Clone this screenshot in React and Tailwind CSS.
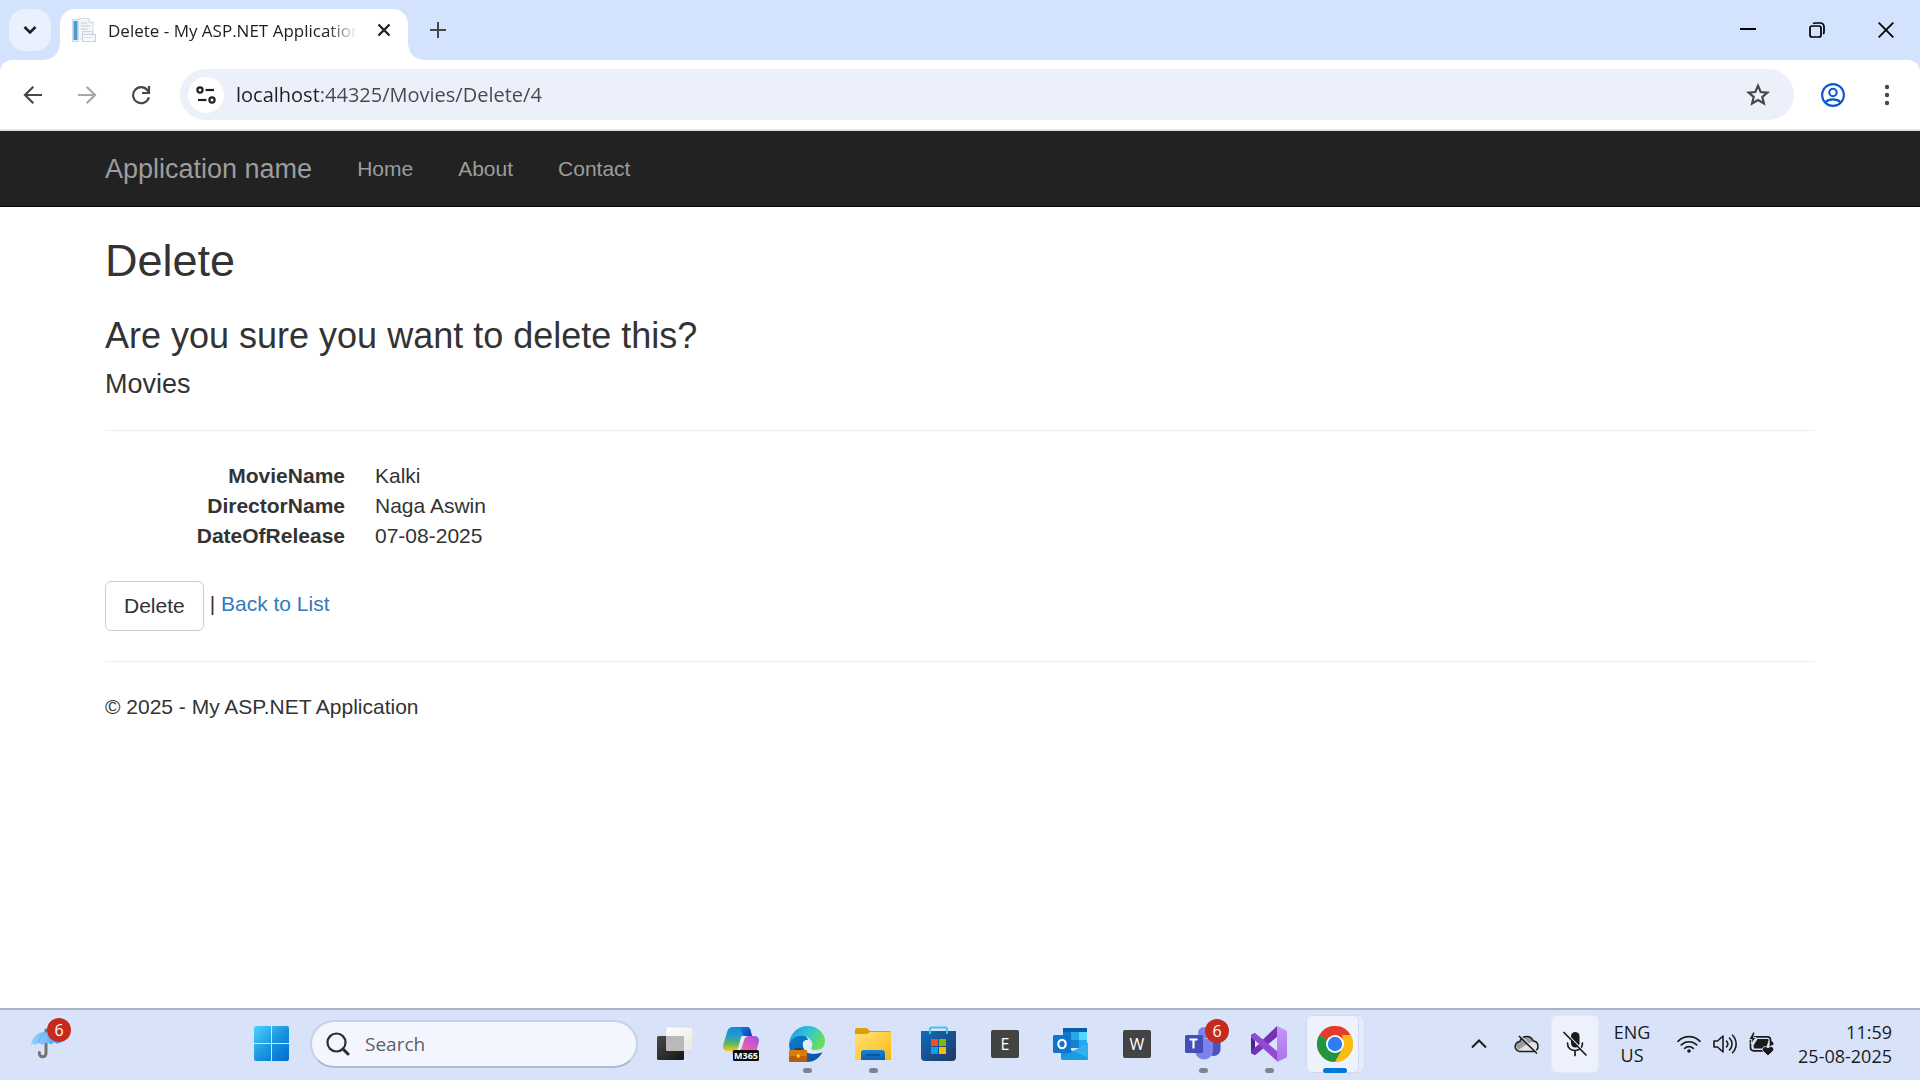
import React from "react";

const UI = "font-['Open_Sans','Noto_Sans',sans-serif]";

/* ---------- browser icons ---------- */

const stroke = { fill: "none", stroke: "currentColor", strokeLinecap: "butt", strokeLinejoin: "miter" };

const ChevronDown = () => (
  <svg width="14" height="10" viewBox="0 0 14 10" {...stroke} strokeWidth="2.6"><path d="M1.5 2 7 7.5 12.5 2" /></svg>
);
const CloseTab = () => (
  <svg width="14" height="14" viewBox="0 0 14 14" {...stroke} strokeWidth="2.3"><path d="M1.5 1.5l11 11M12.5 1.5l-11 11" /></svg>
);
const Plus = () => (
  <svg width="16" height="16" viewBox="0 0 16 16" {...stroke} strokeWidth="2"><path d="M8 0v16M0 8h16" /></svg>
);
const Back = () => (
  <svg width="20" height="20" viewBox="0 0 20 20" {...stroke} strokeWidth="2.2"><path d="M19 10H3M10.3 1.7 2 10l8.3 8.3" /></svg>
);
const Forward = () => (
  <svg width="20" height="20" viewBox="0 0 20 20" {...stroke} strokeWidth="2.2"><path d="M1 10h16M9.7 1.7 18 10l-8.3 8.3" /></svg>
);
const Reload = () => (
  <svg width="20" height="20" viewBox="0 0 20 20" {...stroke} strokeWidth="2.2">
    <path d="M17.9 12.2A8 8 0 1 1 16.4 5.2L18 7.4" />
    <path d="M18 1v7h-7" />
  </svg>
);
const Tune = () => (
  <svg width="20" height="20" viewBox="0 0 20 20" {...stroke} strokeWidth="2.2">
    <circle cx="4" cy="5" r="2.6" /><path d="M9.5 5H18" />
    <circle cx="16" cy="15" r="2.6" /><path d="M2 15h8.5" />
  </svg>
);
const Star = () => (
  <svg width="24" height="24" viewBox="0 0 24 24" {...stroke} strokeWidth="2.2">
    <path d="M12 2.800l2.700 6.200 6.700.6-5.100 4.400 1.600 6.500-5.900-3.500-5.900 3.500L7.700 14l-5.100-4.400 6.700-.6z" />
  </svg>
);
const Profile = () => (
  <svg width="24" height="24" viewBox="0 0 24 24" {...stroke} strokeWidth="2.1">
    <circle cx="12" cy="12" r="10.900" /><circle cx="12" cy="9.500" r="3.700" />
    <path d="M4.300 19.400C6.200 17.400 9 16.400 12 16.400s5.800 1 7.700 3" />
  </svg>
);
const Dots = () => (
  <svg width="6" height="22" viewBox="0 0 6 22" fill="currentColor"><circle cx="3" cy="3" r="2.200" /><circle cx="3" cy="11" r="2.200" /><circle cx="3" cy="19" r="2.200" /></svg>
);
const Minimize = () => (
  <svg width="16" height="16" viewBox="0 0 16 16" {...stroke} strokeWidth="2"><path d="M0 7h16" /></svg>
);
const Restore = () => (
  <svg width="16" height="16" viewBox="0 0 16 16" {...stroke} strokeWidth="1.700">
    <rect x="1" y="4" width="11" height="11" rx="2" /><path d="M4 1.500C5 1 5.500 1 6.500 1H11.500A3.500 3.500 0 0 1 15 4.500V10c0 .8-.2 1.400-.8 2" />
  </svg>
);
const CloseWindow = () => (
  <svg width="16" height="16" viewBox="0 0 16 16" {...stroke} strokeWidth="1.800"><path d="M.7.700l14.600 14.600M15.300.700.700 15.300" /></svg>
);
const Favicon = () => (
  <svg width="24" height="25" viewBox="0 0 24 25" className="shrink-0">
    <path d="M6 .5h11l4 4V21H6z" fill="#f3f5f7" stroke="#d8dce1" />
    <path d="M17 .5v4h4" fill="#fff" stroke="#cfd4da" />
    <path d="M9 5h6M9 8h9M9 11h7" stroke="#dde1e6" strokeWidth="2" />
    <rect x=".5" y="1.500" width="6" height="22" fill="#e3edf5" stroke="#d4dce4" />
    <rect x="1.500" y="3" width="4" height="19" fill="#4b9cd3" />
    <rect x="10.500" y="13.500" width="10" height="8" fill="#edf0f3" stroke="#d0d5db" />
    <rect x="10.500" y="16.500" width="13" height="7" fill="#f6f8fa" stroke="#c9cfd6" />
    <path d="M12 19.500h9" stroke="#dde2e8" />
  </svg>
);

/* ---------- taskbar icons ---------- */

const Umbrella = () => (
  <svg width="34" height="32" viewBox="0 0 34 32">
    <defs><linearGradient id="umb" x1="0" y1="0" x2="1" y2="0"><stop offset="0" stopColor="#8fd0ff" /><stop offset=".5" stopColor="#79bdfb" /><stop offset="1" stopColor="#3f92ea" /></linearGradient></defs>
    <path d="M15 2v23.500a3.300 3.300 0 0 1-6.600 0v-1" fill="none" stroke="#77716f" strokeWidth="3" strokeLinecap="round" />
    <path d="M0 16.500C1 8.500 7 4 14.500 4S29 8.500 30.500 15.500l-1.500-1.200-2.500 1.700-3-1.700-3.500 2.200-4-2-4.500 2.200L7.500 15 4 16.900 2 15.700z" fill="url(#umb)" />
    <path d="M14.500 4C10 7 8 11 7.500 15M14.500 4C17.500 7 19.500 11 20 16" fill="none" stroke="#5aa4e8" strokeWidth=".8" />
  </svg>
);
const WindowsLogo = () => (
  <svg width="36" height="36" viewBox="0 0 36 36">
    <defs><linearGradient id="win" gradientUnits="userSpaceOnUse" x1="0" y1="0" x2="36" y2="36"><stop offset="0" stopColor="#4fd3ff" /><stop offset=".5" stopColor="#1a95e0" /><stop offset="1" stopColor="#0069cc" /></linearGradient></defs>
    <g fill="url(#win)"><path d="M2 0h15v17H0V2a2 2 0 0 1 2-2z" /><path d="M18 0h15a2 2 0 0 1 2 2v15H18z" /><path d="M0 18h17v17H2a2 2 0 0 1-2-2z" /><path d="M18 18h17v15a2 2 0 0 1-2 2H18z" /></g>
  </svg>
);
const SearchGlyph = () => (
  <svg width="24" height="24" viewBox="0 0 24 24" fill="none" stroke="#2b2d31" strokeLinecap="round"><circle cx="10.500" cy="10.500" r="9" strokeWidth="2.200" /><path d="M17 17l5 5" strokeWidth="3" /></svg>
);
const TaskView = () => (
  <svg width="36" height="36" viewBox="0 0 36 36">
    <defs><linearGradient id="tv" x1="0" y1="0" x2="1" y2="1"><stop offset="0" stopColor="#4a4a4a" /><stop offset="1" stopColor="#151515" /></linearGradient>
      <linearGradient id="tv2" x1="0" y1="0" x2="1" y2="1"><stop offset="0" stopColor="#fff" /><stop offset="1" stopColor="#e6e6e6" /></linearGradient></defs>
    <rect x="9" y="1" width="27" height="24" rx="1" fill="url(#tv2)" stroke="#d5d9e0" strokeWidth=".6" />
    <rect x="0" y="10" width="27" height="24" rx="1.500" fill="url(#tv)" />
    <path d="M9 10h18v15H10a1 1 0 0 1-1-1z" fill="#b9b9b9" />
  </svg>
);
const Copilot = () => (
  <svg width="36" height="36" viewBox="0 0 36 36">
    <defs>
      <linearGradient id="cpA" x1="0" y1="0" x2="0" y2="1"><stop offset="0" stopColor="#1186e6" /><stop offset=".4" stopColor="#2a9cc4" /><stop offset=".7" stopColor="#5fb85c" /><stop offset="1" stopColor="#f2cf1c" /></linearGradient>
      <linearGradient id="cpB" x1="0" y1="0" x2="1" y2="1"><stop offset="0" stopColor="#0f7de0" /><stop offset="1" stopColor="#123fae" /></linearGradient>
      <linearGradient id="cpC" x1="1" y1="0" x2="0" y2="1"><stop offset="0" stopColor="#9a52f0" /><stop offset=".5" stopColor="#e85bb0" /><stop offset="1" stopColor="#ff8a4c" /></linearGradient>
    </defs>
    <path d="M10 1h14c2 0 3 1 3.500 3l1.500 6h-5c-3 0-5 2-6 5l-2.500 8c-.5 2-2 2-4 2H4c-3 0-4.500-2-3.800-6L4 6c1-3.500 3-5 6-5z" fill="url(#cpA)" />
    <path d="M16 1h8c2 0 3 1 3.500 3l1.500 6h-6c-2.500 0-3.500-1.500-4-4S18 1.500 16 1z" fill="url(#cpB)" />
    <path d="M25 10h6c4 0 5.500 2.500 4.800 6L33 26c-1 3-3 5-6 5H14c-3 0-4-1-4.500-3L9 24.500h3c3 0 4.500-1.500 5.500-4.500l2.500-7c.8-2 2.500-3 5-3z" fill="url(#cpC)" />
    <path d="M19 10h6c-2 .5-3 1.500-3.500 3l-3 9c-.7 2-2 3-4 3h-2.500c2-.5 3-2 3.500-4l2-8c.4-1.500.8-2.400 1.500-3z" fill="#e6eaf9" />
    <rect x="10" y="24" width="26" height="11" rx="1.500" fill="#0a0a0a" />
    <text x="23" y="33" textAnchor="middle" fontFamily="Open Sans" fontWeight="700" fontSize="9" fill="#fff">M365</text>
  </svg>
);
const Edge = () => (
  <svg width="36" height="36" viewBox="0 0 36 36">
    <defs>
      <linearGradient id="edA" x1="0" y1="0" x2="1" y2=".5"><stop offset="0" stopColor="#1a8fe0" /><stop offset=".5" stopColor="#2fc3d6" /><stop offset="1" stopColor="#66e05a" /></linearGradient>
      <linearGradient id="edB" x1="0" y1="0" x2="1" y2="1"><stop offset="0" stopColor="#0b82d6" /><stop offset="1" stopColor="#0f4aa0" /></linearGradient>
    </defs>
    <path d="M0 18a18 18 0 0 1 4-9c6-3 15 0 15 6-3-2-6 1-5 5 2 7 12 9 19.500 6C30 33 24 36 18 36A18 18 0 0 1 0 18z" fill="url(#edB)" />
    <path d="M.2 17C1.500 7 9 0 18.500 0 29 0 36 7.500 36 15c0 7-5 9-10 9-4 0-4.500-1.500-3.500-3 2.500-4-1-9.500-7.500-11C8.500 8.600 3 12 .2 17z" fill="url(#edA)" />
    <path d="M20 14.500c-4-1.500-6.500 1.500-6 5 .6 4.500 3.500 7.500 7.500 8 5 .7 9.500 0 12-2-3 .9-7 .9-9.500 0-3-1-1.500-3-1-5 .4-2.400-1-5-3-6z" fill="#e3edf9" />
    <path d="M7 25v-2h5v2" fill="none" stroke="#5c3200" strokeWidth="1.500" />
    <rect x="0" y="24" width="18" height="12" rx="1" fill="#b86004" /><rect x="0" y="24" width="18" height="6" fill="#d67c0c" />
    <rect x="8" y="28.500" width="2.500" height="3" fill="#ffe04a" />
  </svg>
);
const Folder = () => (
  <svg width="36" height="36" viewBox="0 0 36 36">
    <defs><linearGradient id="fo" x1="0" y1="0" x2="1" y2="1"><stop offset="0" stopColor="#ffe07a" /><stop offset=".5" stopColor="#ffcf45" /><stop offset="1" stopColor="#f7b410" /></linearGradient>
      <linearGradient id="fo2" x1="0" y1="0" x2="0" y2="1"><stop offset="0" stopColor="#1684d8" /><stop offset="1" stopColor="#0f5fae" /></linearGradient></defs>
    <path d="M0 4a2 2 0 0 1 2-2h9.500l3.500 3h19a2 2 0 0 1 2 2v5H0z" fill="#dd9f08" />
    <path d="M0 8h12l3-2h19a2 2 0 0 1 2 2v26H0z" fill="url(#fo)" />
    <path d="M6 34V27a3 3 0 0 1 3-3h18a3 3 0 0 1 3 3v7z" fill="url(#fo2)" />
    <path d="M11 29h14" stroke="#0a4a8c" strokeWidth="1.500" />
  </svg>
);
const Store = () => (
  <svg width="36" height="36" viewBox="0 0 36 36">
    <defs><linearGradient id="st" x1="0" y1="0" x2="1" y2="1"><stop offset="0" stopColor="#0c6ec0" /><stop offset="1" stopColor="#24365f" /></linearGradient></defs>
    <path d="M0 5h35v26a4 4 0 0 1-4 4H4a4 4 0 0 1-4-4z" fill="url(#st)" />
    <path d="M9 8V3a1.500 1.500 0 0 1 1.500-1.500h14A1.500 1.500 0 0 1 26 3v5" fill="none" stroke="#3fc6f5" strokeWidth="2" />
    <rect x="10" y="13" width="7" height="7" fill="#f25022" /><rect x="18" y="13" width="7" height="7" fill="#7fba00" />
    <rect x="10" y="21" width="7" height="7" fill="#00a4ef" /><rect x="18" y="21" width="7" height="7" fill="#ffb900" />
  </svg>
);
const LetterTile = ({ children }) => (
  <span className="flex size-7 items-center justify-center rounded-xs bg-[#434343] text-base leading-none text-white">{children}</span>
);
const Outlook = () => (
  <svg width="36" height="36" viewBox="0 0 36 36">
    <rect x="10" y="2" width="24" height="9" fill="#0a5ca8" />
    <rect x="10" y="6" width="8" height="8" fill="#0f78c8" /><rect x="18" y="6" width="8" height="8" fill="#28a8ea" /><rect x="26" y="6" width="8" height="8" fill="#50d9ff" />
    <rect x="10" y="14" width="8" height="8" fill="#0a5ca8" /><rect x="18" y="14" width="8" height="8" fill="#1380d0" /><rect x="26" y="14" width="8" height="8" fill="#28a8ea" />
    <path d="M8 18l13.500 8L35 17v15a2 2 0 0 1-2 2H10a2 2 0 0 1-2-2z" fill="#1590dc" />
    <path d="M35 17v15c0 1.500-1 2-2 2L20 25z" fill="#32b0ee" />
    <path d="M10 34h23c1.500 0 2-1 2-2l-14-7-13 7c0 1 1 2 2 2z" fill="#1a9be2" />
    <rect x="0" y="9" width="18" height="18" rx="1.500" fill="#0f74cc" />
    <ellipse cx="9" cy="18" rx="3.700" ry="4.200" fill="none" stroke="#fff" strokeWidth="2.200" />
  </svg>
);
const Teams = () => (
  <svg width="36" height="36" viewBox="0 0 36 36">
    <circle cx="29.500" cy="8" r="4" fill="#5059c9" />
    <path d="M23 14h12.500v10a6.500 6.500 0 0 1-6.500 6c-3 0-5-2-6-4z" fill="#4b53bc" />
    <circle cx="19" cy="7" r="6" fill="#7b83eb" />
    <path d="M10 13h16a2 2 0 0 1 2 2v9c0 5.500-4 9.500-9 9.500S10 29.500 10 24z" fill="#7b83eb" />
    <rect x="0" y="9" width="18" height="18" rx="1.500" fill="#464eb8" />
    <path d="M4.500 13.500h8M8.500 13.500v9" stroke="#fff" strokeWidth="2.200" />
  </svg>
);
const VisualStudio = () => (
  <svg width="36" height="36" viewBox="0 0 36 36">
    <defs><linearGradient id="vs" x1="0" y1="0" x2="0" y2="1"><stop offset="0" stopColor="#c896f5" /><stop offset="1" stopColor="#a873ec" /></linearGradient></defs>
    <path d="M0 9l4-2v22l-4-2z" fill="#52218a" />
    <path d="M4 29l-4-2v-2L26 0l1 10L5 28.500z" fill="#7433b4" />
    <path d="M0 9l4-2 23 19v10L0 11.500z" fill="#8f4cd0" />
    <path d="M4 14.500v7L8 18z" fill="#d7e2f9" />
    <path d="M26 0l9 4.200a2 2 0 0 1 1 1.800v24a2 2 0 0 1-1 1.800L26 36z" fill="url(#vs)" />
  </svg>
);
const Chrome = () => (
  <svg width="36" height="36" viewBox="0 0 36 36">
    <circle cx="18" cy="18" r="18" fill="#fbbc12" />
    <path d="M18 18 2.410 9A18 18 0 0 1 33.590 9z" fill="#e33b2e" />
    <path d="M2.410 9A18 18 0 0 0 18 36l7.800-13.500-7.800-4.500z" fill="#229444" />
    <path d="M18 36l7.790-13.500A9 9 0 0 0 25.800 13.500L25 9h8.590A18 18 0 0 1 18 36z" fill="#fbbc12" />
    <circle cx="18" cy="18" r="9" fill="#fff" /><circle cx="18" cy="18" r="7.200" fill="#2f7bf0" />
  </svg>
);

const ChevronUp = () => (
  <svg width="16" height="10" viewBox="0 0 16 10" {...stroke} strokeWidth="2"><path d="M1 8.500l7-7 7 7" /></svg>
);
const CloudOff = () => (
  <svg width="26" height="22" viewBox="0 0 26 22">
    <path d="M6.500 18.500a5 5 0 0 1-.7-10A7.200 7.200 0 0 1 19.300 8a5.300 5.300 0 0 1 .2 10.500z" fill="#e2e2e2" />
    <path d="M2 13a5 5 0 0 1 3.800-4.500A7.200 7.200 0 0 1 19.300 8L12 12l-8 5z" fill="#9c9c9c" />
    <path d="M6.500 18.500a5 5 0 0 1-.7-10A7.200 7.200 0 0 1 19.300 8a5.300 5.300 0 0 1 .2 10.500z" fill="none" stroke="#1b1b1b" strokeWidth="1.500" />
    <path d="M6 2.500 24 20" stroke="#dfe8fa" strokeWidth="1.500" /><path d="M5 3l18 17.500" stroke="#1b1b1b" strokeWidth="1.600" />
  </svg>
);
const MicOff = () => (
  <svg width="24" height="26" viewBox="0 0 24 26" fill="none" stroke="#1b1b1b" strokeLinecap="round">
    <rect x="8" y="1" width="8.500" height="15.500" rx="4.200" fill="#1b1b1b" stroke="none" />
    <path d="M4.500 12c0 5 3.500 7.500 7.500 7.500s7.500-2.500 7.500-7.500M12 20v4.500" strokeWidth="1.700" />
    <path d="M2 1l22 22.500" stroke="#eef2fc" strokeWidth="1.500" /><path d="M1 1.500l22 22.500" strokeWidth="1.700" />
  </svg>
);
const Wifi = () => (
  <svg width="24" height="18" viewBox="0 0 24 18" fill="none" stroke="#1b1b1b" strokeWidth="1.700" strokeLinecap="round">
    <path d="M1 6.300a15.500 15.500 0 0 1 22 0M4.300 9.900a11 11 0 0 1 15.400 0M7.700 13.300a6.300 6.300 0 0 1 8.600 0" /><circle cx="12" cy="16" r="1.800" fill="#1b1b1b" stroke="none" />
  </svg>
);
const Speaker = () => (
  <svg width="25" height="20" viewBox="0 0 25 20" fill="none" stroke="#1b1b1b" strokeWidth="1.600" strokeLinecap="round" strokeLinejoin="round">
    <path d="M1 7v6h3.500L10 18V2L4.500 7z" /><path d="M13.500 7a4.500 4.500 0 0 1 0 6M16.500 4a8.500 8.500 0 0 1 0 12M19.500 1.200a12.500 12.500 0 0 1 0 17.600" />
  </svg>
);
const Battery = () => (
  <svg width="25" height="24" viewBox="0 0 25 24">
    <rect x="1.500" y="4.800" width="20" height="14" rx="3" fill="none" stroke="#1b1b1b" strokeWidth="1.700" />
    <path d="M8.500 7h10c1 0 1.300.8 1 1.500l-2.500 8H5l-.5-3z" fill="#1b1b1b" />
    <path d="M22 9c2 .5 2.500 1.500 2.500 4h-3z" fill="#1b1b1b" />
    <path d="M4 0 0 7.500h3L2 12l5-6.500H4.500L6 0z" fill="#1b1b1b" stroke="#dbe6fb" strokeWidth=".8" />
    <path d="M19 24l-5-4.800c-2.500-3 1.500-6.500 5-3.400 3.500-3.100 7.500.4 5 3.400z" fill="#1b1b1b" stroke="#dbe6fb" strokeWidth="1" />
  </svg>
);

/* ---------- browser chrome ---------- */

const IconButton = ({ label, className = "", children }) => (
  <button type="button" aria-label={label} className={`flex size-[42px] shrink-0 items-center justify-center rounded-full ${className}`}>{children}</button>
);

function TabStrip() {
  return (
    <div className="flex h-[60px] items-end pl-[9px]">
      <button type="button" aria-label="Search tabs" className="mb-[9px] flex size-[42px] items-center justify-center rounded-2xl bg-[#e9f1fe] text-[#1f1f1f]">
        <ChevronDown />
      </button>
      <div className="relative ml-[9px] flex h-[51px] w-[348px] items-center rounded-t-[15px] bg-white pb-[9px] pl-3 pr-2">
        <span className="absolute bottom-0 right-full size-[15px] bg-[radial-gradient(circle_at_0_0,transparent_14px,white_15px)]" />
        <span className="absolute bottom-0 left-full size-[15px] bg-[radial-gradient(circle_at_100%_0,transparent_14px,white_15px)]" />
        <Favicon />
        <span className="ml-3 mr-2 min-w-0 flex-1 overflow-hidden whitespace-nowrap pt-[2px] text-[17px] leading-6 text-[#1f1f1f] [mask-image:linear-gradient(to_right,black_87%,transparent_99%)]">
          Delete - My ASP.NET Application
        </span>
        <button type="button" aria-label="Close tab" className="flex size-8 items-center justify-center rounded-full text-[#1f1f1f]"><CloseTab /></button>
      </div>
      <IconButton label="New tab" className="mb-[9px] ml-[9px] text-[#474747]"><Plus /></IconButton>
      <div className="ml-auto flex self-stretch text-black">
        {[["Minimize", Minimize], ["Restore", Restore], ["Close", CloseWindow]].map(([label, Icon]) => (
          <button key={label} type="button" aria-label={label} className="flex w-[69px] items-center justify-center"><Icon /></button>
        ))}
      </div>
    </div>
  );
}

function Toolbar() {
  return (
    <div className="flex h-[71px] items-center rounded-t-xl border-b-2 border-[#e2e3e6] bg-white pl-3 pr-3 text-[#474747]">
      <div className="flex gap-3">
        <IconButton label="Back"><Back /></IconButton>
        <IconButton label="Forward" className="text-[#a8a8a8]"><Forward /></IconButton>
        <IconButton label="Reload"><Reload /></IconButton>
      </div>
      <form className="ml-[18px] flex h-[51px] min-w-0 flex-1 items-center rounded-full bg-[#ebf0fa] pl-2 pr-[15px]" onSubmit={(e) => e.preventDefault()}>
        <button type="button" aria-label="View site information" className="flex size-9 shrink-0 items-center justify-center rounded-full bg-white text-[#1f1f1f]"><Tune /></button>
        <input
          aria-label="Address"
          defaultValue="localhost:44325/Movies/Delete/4"
          className="ml-3 min-w-0 flex-1 bg-[linear-gradient(to_right,#1f1f1f_82px,#474747_82px)] bg-clip-text text-xl text-transparent outline-none"
        />
        <button type="button" aria-label="Bookmark this tab" className="flex size-[42px] items-center justify-center"><Star /></button>
      </form>
      <IconButton label="Profile" className="ml-[18px] text-[#0b57d0]"><Profile /></IconButton>
      <IconButton label="Menu" className="ml-3"><Dots /></IconButton>
    </div>
  );
}

/* ---------- web page ---------- */

const fields = [
  ["MovieName", "Kalki"],
  ["DirectorName", "Naga Aswin"],
  ["DateOfRelease", "07-08-2025"],
];

function Page() {
  return (
    <div className="min-h-0 flex-1 overflow-hidden bg-white font-['Liberation_Sans',Arial,sans-serif] text-[21px] leading-[30px] text-[#333]">
      <nav className="border-b border-[#080808] bg-[#222] px-[105px] text-[#9d9d9d]">
        <div className="mx-auto flex h-[75px] max-w-[1710px] items-center gap-[45px]">
          <a href="#app" className="text-[27px]">Application name</a>
          <a href="#home">Home</a>
          <a href="#about">About</a>
          <a href="#contact">Contact</a>
        </div>
      </nav>
      <div className="px-[105px] pt-[29px]">
        <main className="mx-auto max-w-[1710px]">
          <h2 className="text-[45px] leading-[49px]">Delete</h2>
          <h3 className="mt-[31px] text-[36px] leading-[40px]">Are you sure you want to delete this?</h3>
          <h4 className="mt-[13px] text-[27px] leading-[30px]">Movies</h4>
          <hr className="mb-[30px] mt-[31px] border-[#eee]" />
          <dl className="grid grid-cols-[240px_1fr] gap-x-[30px]">
            {fields.map(([name, value]) => (
              <React.Fragment key={name}>
                <dt className="text-right font-bold">{name}</dt>
                <dd>{value}</dd>
              </React.Fragment>
            ))}
          </dl>
          <form className="mt-[30px] flex items-start" onSubmit={(e) => e.preventDefault()}>
            <button type="submit" className="rounded-md border border-[#ccc] bg-white px-[18px] py-[9px]">Delete</button>
            <span className="ml-[6px] mt-2">| <a href="#list" className="text-[#337ab7]">Back to List</a></span>
          </form>
          <hr className="my-[30px] border-[#eee]" />
          <footer><p>© 2025 - My ASP.NET Application</p></footer>
        </main>
      </div>
    </div>
  );
}

/* ---------- taskbar ---------- */

const apps = [
  { label: "Task View", icon: <TaskView /> },
  { label: "Microsoft 365 Copilot", icon: <Copilot /> },
  { label: "Edge", icon: <Edge />, open: true },
  { label: "File Explorer", icon: <Folder />, open: true },
  { label: "Microsoft Store", icon: <Store /> },
  { label: "E", icon: <LetterTile>E</LetterTile> },
  { label: "Outlook", icon: <Outlook /> },
  { label: "W", icon: <LetterTile>W</LetterTile> },
  { label: "Teams", icon: <Teams />, open: true, badge: 6 },
  { label: "Visual Studio", icon: <VisualStudio />, open: true },
  { label: "Chrome", icon: <Chrome />, active: true },
];

const Badge = ({ children, className }) => (
  <span className={`absolute flex size-6 items-center justify-center rounded-full bg-[#c42b1c] text-base leading-none text-white ${className}`}>{children}</span>
);

function AppButton({ label, icon, open, active, badge }) {
  return (
    <button type="button" aria-label={label} className="relative flex h-[60px] w-[66px] items-center justify-center">
      {active && <span className="absolute inset-y-px left-3 right-[3px] rounded-md border border-[#d3dcee] bg-[#e4ecfb]" />}
      {active && <span className="absolute inset-y-px left-1 right-[9px] rounded-md border border-[#d0daee] bg-[#edf2fc]" />}
      <span className="relative">{icon}</span>
      {badge && <Badge className="right-[7px] top-[5px]">{badge}</Badge>}
      {open && <span className="absolute bottom-px h-[5px] w-[9px] rounded-full bg-[#7d8592]" />}
      {active && <span className="absolute bottom-px h-[5px] w-6 rounded-full bg-[#0078d4]" />}
    </button>
  );
}

function Taskbar() {
  return (
    <footer className="flex h-[72px] shrink-0 items-center border-t-2 border-[#abb4c7] bg-[#d8e3fa] pb-[2px] text-lg leading-6 text-[#1b1b1b]">
      <button type="button" aria-label="Weather" className="relative ml-[31px] flex h-[60px] w-10 items-center">
        <Umbrella />
        <Badge className="right-0 top-1">6</Badge>
      </button>
      <button type="button" aria-label="Start" className="ml-[171px] flex size-[60px] items-center justify-center"><WindowsLogo /></button>
      <label className="ml-2 flex h-12 w-[328px] items-center gap-[15px] rounded-full border-2 border-[#c6d1e8] border-b-[#b0bbd2] bg-[#f3f6fe] pl-[14px] pr-5">
        <SearchGlyph />
        <input type="search" aria-label="Search" placeholder="Search" className="min-w-0 flex-1 bg-transparent text-[19px] outline-none placeholder:text-[#5c5f66]" />
      </label>
      <div className="ml-1 flex">
        {apps.map((app) => <AppButton key={app.label} {...app} />)}
      </div>
      <div className="ml-auto flex items-center pr-7">
        <button type="button" aria-label="Show hidden icons" className="flex h-[58px] w-12 items-center justify-center"><ChevronUp /></button>
        <button type="button" aria-label="OneDrive" className="flex h-[58px] w-12 items-center justify-center"><CloudOff /></button>
        <button type="button" aria-label="Microphone muted" className="flex h-[58px] w-12 items-center justify-center rounded-md border border-[#e2e9f8] bg-[#ecf1fc]"><MicOff /></button>
        <button type="button" className="w-[66px] text-center leading-[23px]">ENG<br />US</button>
        <button type="button" aria-label="Network, volume and battery" className="ml-3 flex w-[97px] items-center justify-between"><Wifi /><Speaker /><Battery /></button>
        <button type="button" className="ml-6 text-right leading-6">11:59<br />25-08-2025</button>
      </div>
    </footer>
  );
}

export default function App() {
  return (
    <div className={`flex h-screen flex-col overflow-hidden ${UI}`}>
      <header className="shrink-0 bg-[#d3e3fd]">
        <TabStrip />
        <Toolbar />
      </header>
      <Page />
      <Taskbar />
    </div>
  );
}
